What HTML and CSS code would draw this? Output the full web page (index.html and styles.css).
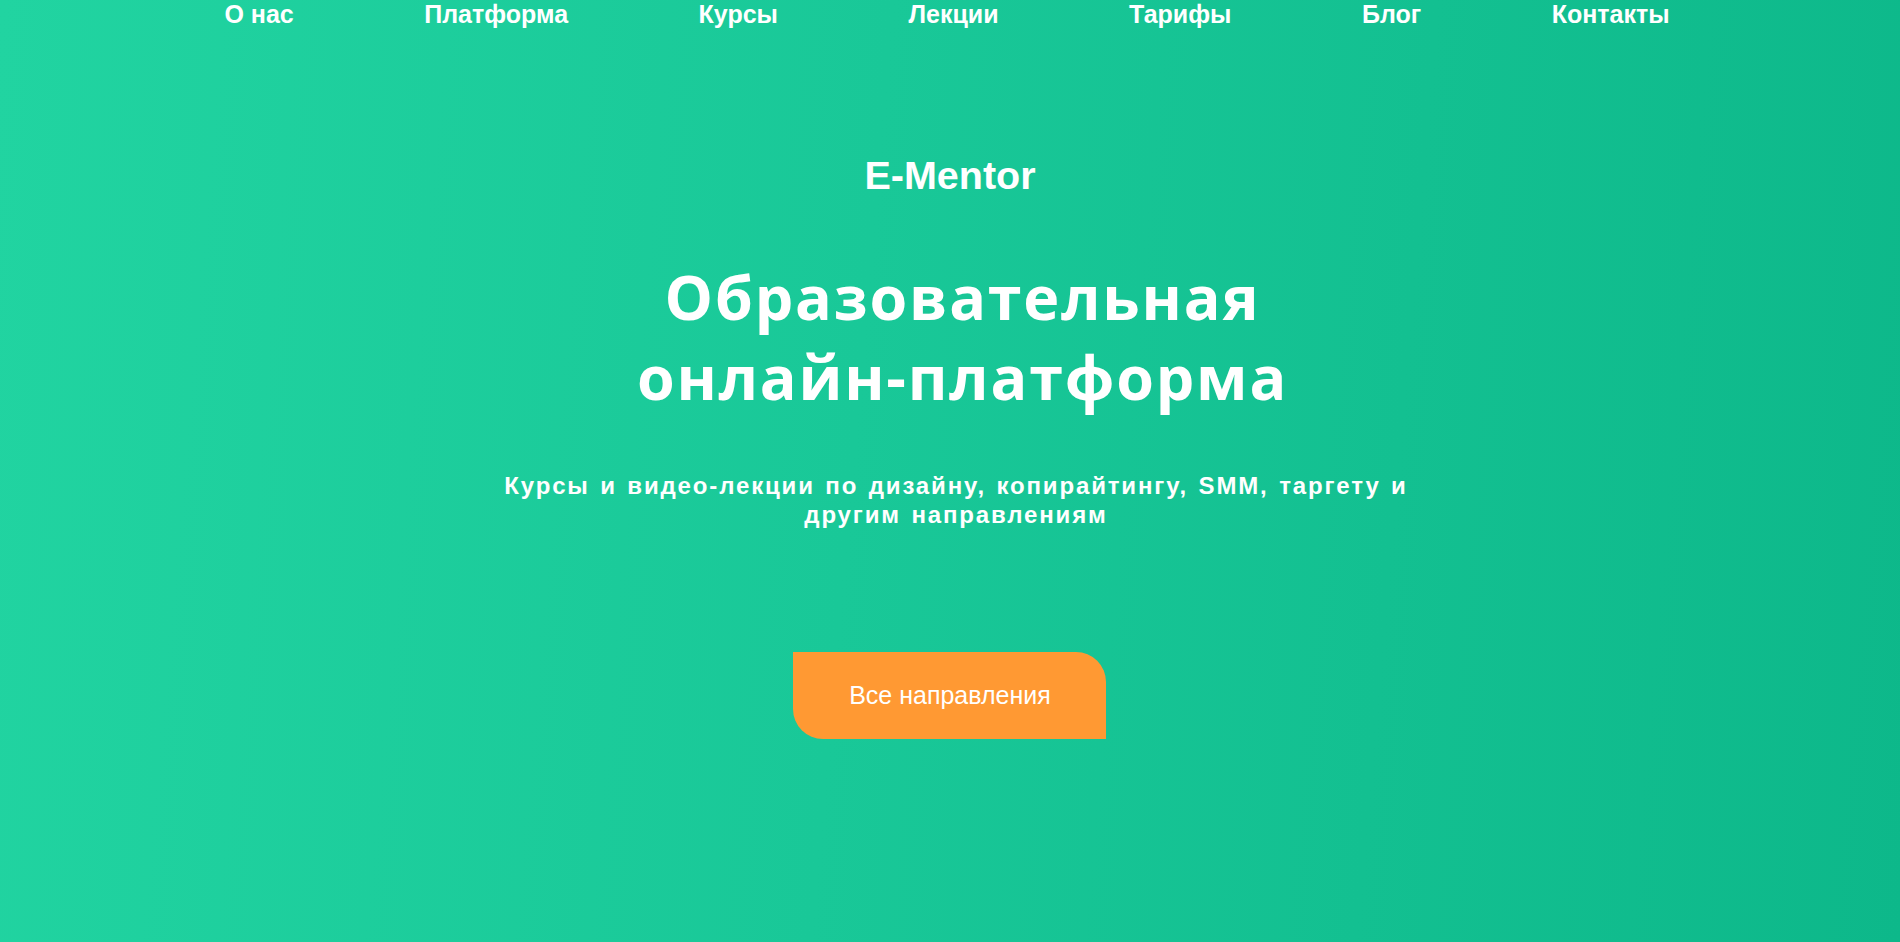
FILE: index.html
```html
<!DOCTYPE html>
<html lang="ru">
<head>
<meta charset="utf-8">
<title>E-Mentor</title>
<link rel="stylesheet" href="styles.css">
</head>
<body>
<div class="page">
  <nav class="nav">
    <a class="nav-link" href="#">О нас</a>
    <a class="nav-link" href="#">Платформа</a>
    <a class="nav-link" href="#">Курсы</a>
    <a class="nav-link" href="#">Лекции</a>
    <a class="nav-link" href="#">Тарифы</a>
    <a class="nav-link" href="#">Блог</a>
    <a class="nav-link" href="#">Контакты</a>
  </nav>
  <main class="hero">
    <div class="brand">E-Mentor</div>
    <h1 class="title">Образовательная<br>онлайн-платформа</h1>
    <p class="subtitle">Курсы и видео-лекции по дизайну, копирайтингу, SMM, таргету и<br>другим направлениям</p>
    <a class="cta" href="#">Все направления</a>
  </main>
</div>
</body>
</html>
```

FILE: styles.css
```css
html, body {
  margin: 0;
  padding: 0;
}
body {
  font-family: "Liberation Sans", Arial, sans-serif;
  color: #ffffff;
}
.page {
  min-height: 942px;
  background: linear-gradient(95deg, #21d4a1 0%, #19c898 45%, #0db88a 100%);
  display: flex;
  flex-direction: column;
  align-items: center;
}
.nav {
  display: flex;
  justify-content: center;
  gap: 130.5px;
  padding-right: 6px;
}
.nav-link {
  color: #ffffff;
  text-decoration: none;
  font-weight: 700;
  font-size: 25px;
}
.hero {
  display: flex;
  flex-direction: column;
  align-items: center;
  text-align: center;
}
.brand {
  margin-top: 124px;
  font-weight: 700;
  font-size: 39.5px;
}
.title {
  margin: 59px 0 0;
  padding-left: 25px;
  font-family: "Open Sans", "Noto Sans", sans-serif;
  font-weight: 700;
  font-size: 61px;
  line-height: 80px;
  letter-spacing: 1.8px;
}
.subtitle {
  margin: 54px 0 0;
  padding-left: 12px;
  font-weight: 700;
  font-size: 24px;
  line-height: 29px;
  letter-spacing: 1.85px;
  word-spacing: 2px;
}
.cta {
  margin-top: 123px;
  width: 313px;
  height: 87px;
  display: flex;
  align-items: center;
  justify-content: center;
  background: #ff9933;
  color: #ffffff;
  text-decoration: none;
  font-size: 25px;
  border-radius: 0 30px 0 30px;
}
```
